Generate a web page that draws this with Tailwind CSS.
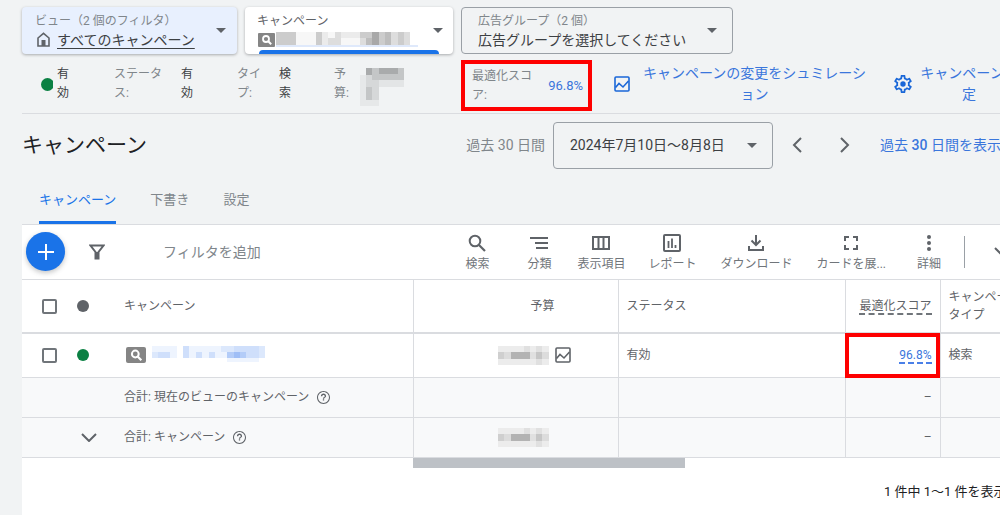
<!DOCTYPE html>
<html lang="ja">
<head>
<meta charset="utf-8">
<title>キャンペーン</title>
<script src="https://cdn.jsdelivr.net/npm/@tailwindcss/browser@4"></script>
</head>
<body class="min-h-screen overflow-hidden bg-[#f1f3f4] font-['Roboto','Noto_Sans_CJK_JP',sans-serif] text-xs text-[#5f6368]">
<svg class="hidden" aria-hidden="true">
  <symbol id="caret" viewBox="0 0 10 5"><path d="M0 0h10L5 5z" fill="currentColor"/></symbol>
  <symbol id="badge" viewBox="0 0 20 16"><rect width="20" height="16" rx="2" fill="#858585"/><circle cx="9.300" cy="7" r="3.400" fill="none" stroke="#fff" stroke-width="2"/><path d="M11.700 9.400l3.600 3.800" stroke="#fff" stroke-width="2.200"/></symbol>
  <symbol id="chart" viewBox="0 0 16 16"><rect x="1" y="1" width="14" height="14" rx="1" fill="none" stroke="currentColor" stroke-width="1.600"/><path d="M1.500 11.500l3.500-4 4 3.500 5.500-6" fill="none" stroke="currentColor" stroke-width="1.600"/></symbol>
  <symbol id="help" viewBox="2 2 20 20"><path fill="currentColor" d="M11 16.500h2v-2h-2v2zm1-14.500C6.480 2 2 6.480 2 12s4.480 10 10 10 10-4.480 10-10S17.520 2 12 2zm0 18.400c-4.600 0-8.400-3.800-8.400-8.400s3.800-8.400 8.400-8.400 8.400 3.800 8.400 8.400-3.800 8.400-8.400 8.400zm0-14.400c-2.210 0-4 1.790-4 4h2c0-1.100.9-2 2-2s2 .9 2 2c0 1.600-3 1.400-3 3.800h2c0-1.600 3-1.800 3-3.800 0-2.210-1.790-4-4-4z"/></symbol>
  <symbol id="amount" viewBox="0 0 51 19"><path fill="#ececec" d="M0 0h51v19H0z"/><path fill="#e0e0e0" d="M26 0h6v6h-6zM38 0h6v6h-6zM32 6h6v7h-6zM38 13h6v6h-6z"/><path fill="#cfcfcf" d="M0 6h6v7H0z"/><path fill="#dcdcdc" d="M6 6h7v7H6zM44 6h7v7h-7z"/><path fill="#b3b3b3" d="M13 6h19v7H13z"/><path fill="#c6c6c6" d="M38 6h6v7h-6z"/></symbol>
</svg>

<div class="flex min-h-screen flex-col pl-[22px]">
  <header class="flex h-[55px] shrink-0 items-start gap-2 pt-[7px]">
    <button class="flex h-[47px] w-[215px] items-center justify-between rounded bg-[#e8f0fe] pr-[11px] pl-[13px] text-left shadow-[0_1px_3px_rgba(60,64,67,0.4)]">
      <span>
        <span class="block leading-[18px] text-[#80868b]">ビュー（2 個のフィルタ）</span>
        <span class="flex items-center gap-[6px] text-sm leading-[20px] text-[#3c4043]">
          <svg class="ml-px size-[15px]" viewBox="0 0 15 15"><path d="M2 14V6l5.500-4.700L13 6v8z" fill="none" stroke="#5f6368" stroke-width="1.600"/><path d="M5.500 8h4v6h-4z" fill="#5f6368"/></svg>
          <span class="underline underline-offset-3">すべてのキャンペーン</span>
        </span>
      </span>
      <svg class="h-[5px] w-[10px]"><use href="#caret"/></svg>
    </button>
    <button class="relative flex h-[47px] w-[208px] items-center justify-between rounded bg-white pr-[10px] pl-3 text-left shadow-[0_1px_3px_rgba(60,64,67,0.4)]">
      <span>
        <span class="block leading-[18px]">キャンペーン</span>
        <span class="flex h-5 items-center gap-px pl-px">
          <svg class="h-[14px] w-[17px]" viewBox="0 0 17 14"><rect width="17" height="14" rx="1" fill="#858585"/><circle cx="8" cy="6" r="3" fill="none" stroke="#fff" stroke-width="1.800"/><path d="M10 8l3.200 3.200" stroke="#fff" stroke-width="2"/></svg>
          <svg class="h-[15px] w-[142px]" viewBox="0 0 142 15">
            <path fill="#f7f7f7" d="M20 0h114v13H20z"/><path fill="#ccc" d="M0 0h20v13H0zM40 0h6v13h-6z"/><path fill="#ebebeb" d="M46 0h6v13h-6zM65 0h19v6H65z"/><path fill="#ddd" d="M52 6h7v7h-7zM59 0h6v13h-6zM84 6h6v7h-6zM115 0h7v13h-7zM128 0h6v13h-6z"/><path fill="#ccc" d="M84 0h12v6H84zM103 0h6v13h-6zM122 0h6v13h-6z"/><path fill="#bdbdbd" d="M90 6h6v7h-6zM109 0h6v13h-6z"/><path fill="#a8a8a8" d="M96 0h7v13h-7z"/><path fill="#dfe9fb" d="M0 13h142v2H0z"/>
          </svg>
        </span>
      </span>
      <svg class="h-[5px] w-[10px]"><use href="#caret"/></svg>
      <span class="absolute inset-x-[14px] bottom-0 h-1 rounded-t bg-[#1a73e8]"></span>
    </button>
    <button class="flex h-[47px] w-[272px] items-center justify-between rounded border border-[#9aa0a6] pr-[15px] pl-4 text-left">
      <span>
        <span class="block leading-[18px] text-[#80868b]">広告グループ（2 個）</span>
        <span class="block text-sm leading-[20px] text-[#3c4043]">広告グループを選択してください</span>
      </span>
      <svg class="h-[5px] w-[10px]"><use href="#caret"/></svg>
    </button>
  </header>

  <section class="flex h-[59px] shrink-0 items-center border-b border-[#dadce0] leading-[19px] text-[#80868b]">
    <div class="flex w-[92px] shrink-0 items-center gap-1 pl-[19px] text-[#3c4043]">
      <span class="w-3 overflow-hidden"><span class="block size-[13px] rounded-full bg-[#0b8043]"></span></span>
      <span class="w-3">有効</span>
    </div>
    <div class="flex w-[123px] shrink-0 gap-[17px]"><span class="w-[50px] break-all">ステータス:</span><span class="w-3 text-[#3c4043]">有効</span></div>
    <div class="flex w-[97px] shrink-0 gap-[17px]"><span class="w-[25px] break-all">タイプ:</span><span class="w-3 text-[#3c4043]">検索</span></div>
    <div class="flex w-[127px] shrink-0 items-center gap-[10px]">
      <span class="w-4 break-all">予算:</span>
      <svg class="mt-[5px] h-[38px] w-[44px]" viewBox="0 0 44 38"><path fill="#e6e8e9" d="M0 7h6v31H0zM6 32h13v6H6z"/><path fill="#a9abac" d="M6 0h6v7H6zM19 0h19v6H19z"/><path fill="#c4c6c7" d="M12 0h7v12h-7zM38 0h6v12h-6zM19 6h19v6H19zM6 19h6v13H6z"/><path fill="#d6d8d9" d="M6 7h6v12H6zM12 12h7v20h-7z"/><path fill="#e3e5e6" d="M19 12h25v7H19z"/></svg>
    </div>
    <div class="mb-[2px] flex h-[51px] w-[131px] shrink-0 items-center justify-between self-end border-4 border-[#fe0000] pr-[5px] pl-[7px]">
      <span class="w-[62px] break-all">最適化スコア:</span>
      <a href="#" class="text-[13px] text-[#3a76dc]">96.8%</a>
    </div>
    <a href="#" class="ml-[22px] flex w-[253px] shrink-0 items-center gap-3 text-center text-sm leading-[21px] text-[#3a76dc]">
      <svg class="size-4 shrink-0 text-[#1a67d8]"><use href="#chart"/></svg>
      <span class="w-[225px] break-all">キャンペーンの変更をシュミレーション</span>
    </a>
    <a href="#" class="ml-[27px] flex shrink-0 items-center gap-2 text-center text-sm leading-[21px] text-[#3a76dc]">
      <svg class="size-[18px] shrink-0 text-[#1a67d8]" viewBox="2 2 20 20"><path fill="currentColor" d="M19.430 12.980c.04-.32.07-.64.07-.98 0-.34-.03-.66-.07-.98l2.110-1.650c.19-.15.24-.42.12-.64l-2-3.460c-.09-.16-.26-.25-.44-.25-.06 0-.12.010-.17.030l-2.490 1c-.52-.4-1.080-.73-1.690-.98l-.38-2.650C14.460 2.180 14.250 2 14 2h-4c-.25 0-.46.180-.49.420l-.38 2.650c-.61.250-1.170.590-1.690.980l-2.490-1c-.06-.02-.12-.03-.18-.03-.17 0-.34.090-.43.250l-2 3.460c-.13.220-.07.490.12.640l2.110 1.650c-.04.320-.07.650-.07.980 0 .33.030.66.070.98l-2.110 1.650c-.19.150-.24.420-.12.640l2 3.460c.09.160.26.250.44.250.06 0 .12-.01.170-.03l2.490-1c.52.400 1.080.730 1.690.980l.38 2.650c.03.240.24.420.49.420h4c.25 0 .46-.18.490-.42l.38-2.650c.61-.25 1.170-.59 1.690-.98l2.490 1c.06.020.12.030.18.030.17 0 .34-.09.430-.25l2-3.460c.12-.22.070-.49-.12-.64l-2.110-1.650zm-1.980-1.710c.04.310.05.520.05.730 0 .21-.02.430-.05.730l-.14 1.130.89.700 1.080.840-.7 1.210-1.270-.51-1.040-.42-.9.680c-.43.320-.84.560-1.250.730l-1.060.430-.16 1.130-.2 1.350h-1.400l-.19-1.350-.16-1.130-1.060-.43c-.43-.18-.83-.41-1.230-.71l-.91-.7-1.060.430-1.270.510-.7-1.210 1.080-.84.890-.7-.14-1.130c-.03-.31-.05-.54-.05-.74s.02-.43.050-.73l.14-1.130-.89-.7-1.080-.84.700-1.210 1.270.510 1.040.420.900-.68c.43-.32.840-.56 1.250-.73l1.060-.43.160-1.130.200-1.350h1.390l.19 1.350.16 1.130 1.060.430c.43.180.83.410 1.230.710l.91.700 1.060-.43 1.270-.51.700 1.210-1.070.850-.89.700.14 1.130z"/><circle cx="12" cy="12" r="3" fill="currentColor"/></svg>
      <span class="w-[98px] break-all">キャンペーン設定</span>
    </a>
  </section>

  <div class="flex h-[62px] shrink-0 items-center text-sm">
    <h1 class="min-w-0 flex-1 text-[21px] leading-7 text-[#202124]">キャンペーン</h1>
    <span class="mr-2 text-[#80868b]">過去 30 日間</span>
    <button class="flex h-[47px] w-[220px] shrink-0 items-center justify-between rounded border border-[#9aa0a6] pr-[15px] pl-4 text-[#3c4043]">
      <span>2024年7月10日～8月8日</span>
      <svg class="h-[5px] w-[10px] text-[#5f6368]"><use href="#caret"/></svg>
    </button>
    <button aria-label="前へ" class="ml-[17px] flex w-[14px] justify-center"><svg class="h-4 w-[10px]" viewBox="0 0 10 16"><path d="M9 1L2 8l7 7" fill="none" stroke="#5f6368" stroke-width="2"/></svg></button>
    <button aria-label="次へ" class="ml-[34px] flex w-[14px] justify-center"><svg class="h-4 w-[10px]" viewBox="0 0 10 16"><path d="M1 1l7 7-7 7" fill="none" stroke="#5f6368" stroke-width="2"/></svg></button>
    <a href="#" class="ml-7 w-[120px] overflow-hidden whitespace-nowrap text-[#3a76dc]">過去 <span class="font-medium">30</span> 日間を表示</a>
  </div>

  <nav class="flex h-[48px] shrink-0 items-stretch gap-[34px] pl-[17px] text-[13px] text-[#80868b]">
    <a href="#" class="flex items-center border-b-3 border-[#1a73e8] pt-[3px] text-[#1a73e8]">キャンペーン</a>
    <a href="#" class="flex items-center">下書き</a>
    <a href="#" class="flex items-center">設定</a>
  </nav>

  <main class="flex-1 border-t border-[#dadce0] bg-white">
    <div class="flex h-[55px] items-center border-b border-[#dadce0] pb-px pl-1 text-[#70757a]">
      <button aria-label="作成" class="flex size-[39px] shrink-0 items-center justify-center rounded-full bg-[#1a73e8] shadow-[0_2px_5px_rgba(60,64,67,0.3)]"><svg class="size-4" viewBox="0 0 16 16"><path d="M8 0v16M0 8h16" stroke="#fff" stroke-width="2"/></svg></button>
      <button aria-label="フィルタ" class="ml-6 shrink-0"><svg class="size-4" viewBox="0 0 16 16"><path d="M1.500 1.500h13L9.500 8v6.500h-3V8z" fill="none" stroke="#5f6368" stroke-width="2"/><path d="M6 8h4v7H6z" fill="#5f6368"/></svg></button>
      <input type="text" aria-label="フィルタを追加" placeholder="フィルタを追加" class="ml-[58px] min-w-0 flex-1 bg-transparent text-sm outline-none placeholder:text-[#80868b]">
      <button class="flex w-[62px] shrink-0 flex-col items-center gap-1 pt-[2px]"><svg class="size-[18px]" viewBox="0 0 18 18"><circle cx="7" cy="7" r="5.300" fill="none" stroke="#5f6368" stroke-width="2"/><path d="M11 11l6 6" stroke="#5f6368" stroke-width="2.200"/></svg><span>検索</span></button>
      <button class="flex w-[62px] shrink-0 flex-col items-center gap-1 pt-[2px]"><svg class="size-[18px]" viewBox="0 0 18 18"><path d="M0 4h18M5 9h13M6 14h12" stroke="#5f6368" stroke-width="2"/></svg><span>分類</span></button>
      <button class="mr-1 flex w-[62px] shrink-0 flex-col items-center gap-1 pt-[2px]"><svg class="size-[18px]" viewBox="0 0 18 18"><path d="M1 3h16v12H1zM6.500 3v12M11.500 3v12" fill="none" stroke="#5f6368" stroke-width="2"/></svg><span>表示項目</span></button>
      <button class="flex shrink-0 flex-col items-center gap-1 px-3 pt-[2px]"><svg class="size-[18px]" viewBox="0 0 18 18"><rect x="1" y="1" width="16" height="16" rx="1" fill="none" stroke="#5f6368" stroke-width="2"/><path d="M5.500 7v7M9 4.500V14M12.500 11v3" stroke="#5f6368" stroke-width="1.800"/></svg><span>レポート</span></button>
      <button class="flex shrink-0 flex-col items-center gap-1 px-3 pt-[2px]"><svg class="size-[18px]" viewBox="0 0 18 18"><path d="M9 1v9M4.500 6.500L9 11l4.500-4.500M2 12v4h14v-4" fill="none" stroke="#5f6368" stroke-width="2"/></svg><span>ダウンロード</span></button>
      <button class="flex shrink-0 flex-col items-center gap-1 px-3 pt-[2px]"><svg class="size-[18px]" viewBox="0 0 18 18"><path d="M3 7V3h4M11 3h4v4M15 11v4h-4M7 15H3v-4" fill="none" stroke="#5f6368" stroke-width="2"/></svg><span>カードを展...</span></button>
      <button class="flex w-[62px] shrink-0 flex-col items-center gap-1 pt-[2px]"><svg class="size-[18px]" viewBox="0 0 18 18"><g fill="#5f6368"><circle cx="9" cy="3" r="2"/><circle cx="9" cy="9" r="2"/><circle cx="9" cy="15" r="2"/></g></svg><span>詳細</span></button>
      <span class="ml-1 h-8 w-px shrink-0 bg-[#9aa0a6]"></span>
      <button aria-label="折りたたむ" class="flex w-[35px] shrink-0 justify-start overflow-hidden pl-[29px]"><svg class="h-[9px] w-4 shrink-0" viewBox="0 0 16 9"><path d="M1 1l7 7 7-7" fill="none" stroke="#5f6368" stroke-width="2"/></svg></button>
    </div>

    <table class="w-full table-fixed border-collapse text-left">
      <colgroup><col class="w-[44px]"><col class="w-[58px]"><col class="w-[289px]"><col class="w-[205px]"><col class="w-[227px]"><col class="w-[95px]"><col></colgroup>
      <thead>
        <tr class="h-[53px] border-b-2 border-[#dadce0]">
          <th class="pl-5"><input type="checkbox" aria-label="すべて選択" class="block size-[15px] appearance-none rounded-[2px] border-2 border-[#70757a]"></th>
          <th class="pl-[11px]"><span class="block size-3 rounded-full bg-[#5f6368]"></span></th>
          <th class="border-r border-[#dadce0] font-normal">キャンペーン</th>
          <th class="border-r border-[#dadce0] pr-[63px] text-right font-normal">予算</th>
          <th class="border-r border-[#dadce0] pl-2 font-normal">ステータス</th>
          <th class="border-r border-[#dadce0] pr-2 text-right font-normal"><span class="border-b-2 border-dashed border-[#70757a]">最適化スコア</span></th>
          <th class="overflow-hidden pl-2 leading-[18px] font-normal whitespace-nowrap">キャンペーン<br>タイプ</th>
        </tr>
      </thead>
      <tbody>
        <tr class="h-[44px] border-b border-[#dadce0]">
          <td class="pl-5"><input type="checkbox" aria-label="キャンペーンを選択" class="block size-[15px] appearance-none rounded-[2px] border-2 border-[#70757a]"></td>
          <td class="pl-[11px]"><span class="block size-3 rounded-full bg-[#0b8043]"></span></td>
          <td class="border-r border-[#dadce0]">
            <div class="flex items-center gap-[6px] pl-[2px]">
              <svg class="h-4 w-5"><use href="#badge"/></svg>
              <svg class="h-[18px] w-[113px]" viewBox="0 0 113 18"><path fill="#eef4fe" d="M0 0h25v12H0zM31 0h82v12H31zM75 12h32v4H75z"/><path fill="#cfdffb" d="M6 6h12v6H6zM31 0h6v12h-6zM44 6h6v6h-6zM57 6h6v6h-6zM75 0h32v12H75z"/><path fill="#dce8fc" d="M0 6h6v6H0zM69 0h13v6H69zM107 0h6v12h-6z"/><path fill="#b3ccf8" d="M75 6h19v6H75z"/><path fill="#9fbef6" d="M82 6h6v6h-6z"/></svg>
            </div>
          </td>
          <td class="border-r border-[#dadce0]"><div class="flex items-center justify-end gap-[6px] pr-[47px]"><svg class="h-[19px] w-[51px]"><use href="#amount"/></svg><svg class="size-4"><use href="#chart"/></svg></div></td>
          <td class="border-r border-[#dadce0] pl-2">有効</td>
          <td class="relative border-r border-[#dadce0] pr-2 text-right"><a href="#" class="border-b-2 border-dashed border-[#4a80e8] text-[#3a76dc]">96.8%</a><span class="pointer-events-none absolute -inset-y-px right-0 -left-px border-4 border-[#fe0000]"></span></td>
          <td class="pl-2">検索</td>
        </tr>
        <tr class="h-[40px] border-b border-[#dadce0] bg-[#f8f9fa]">
          <td></td><td></td>
          <td class="border-r border-[#dadce0]"><div class="flex items-center gap-2">合計: 現在のビューのキャンペーン<svg class="size-[13px]"><use href="#help"/></svg></div></td>
          <td class="border-r border-[#dadce0]"></td><td class="border-r border-[#dadce0]"></td>
          <td class="border-r border-[#dadce0] pr-2 text-right">–</td><td></td>
        </tr>
        <tr class="h-[40px] border-b border-[#dadce0] bg-[#f8f9fa]">
          <td></td>
          <td class="pl-[15px]"><button aria-label="展開" class="block"><svg class="h-[9px] w-4" viewBox="0 0 16 9"><path d="M1 1l7 7 7-7" fill="none" stroke="#5f6368" stroke-width="2"/></svg></button></td>
          <td class="border-r border-[#dadce0]"><div class="flex items-center gap-2">合計: キャンペーン<svg class="size-[13px]"><use href="#help"/></svg></div></td>
          <td class="border-r border-[#dadce0]"><div class="flex justify-end pr-[69px]"><svg class="h-[19px] w-[51px]"><use href="#amount"/></svg></div></td>
          <td class="border-r border-[#dadce0]"></td>
          <td class="border-r border-[#dadce0] pr-2 text-right">–</td><td></td>
        </tr>
      </tbody>
    </table>
    <div class="ml-[391px] h-[10px] w-[272px] bg-[#bdc1c6]"></div>
    <div class="flex justify-end pt-[14px]"><p class="w-[116px] overflow-hidden text-[13px] leading-5 whitespace-nowrap text-[#202124]">1 件中 1～1 件を表示</p></div>
  </main>
</div>
</body>
</html>
